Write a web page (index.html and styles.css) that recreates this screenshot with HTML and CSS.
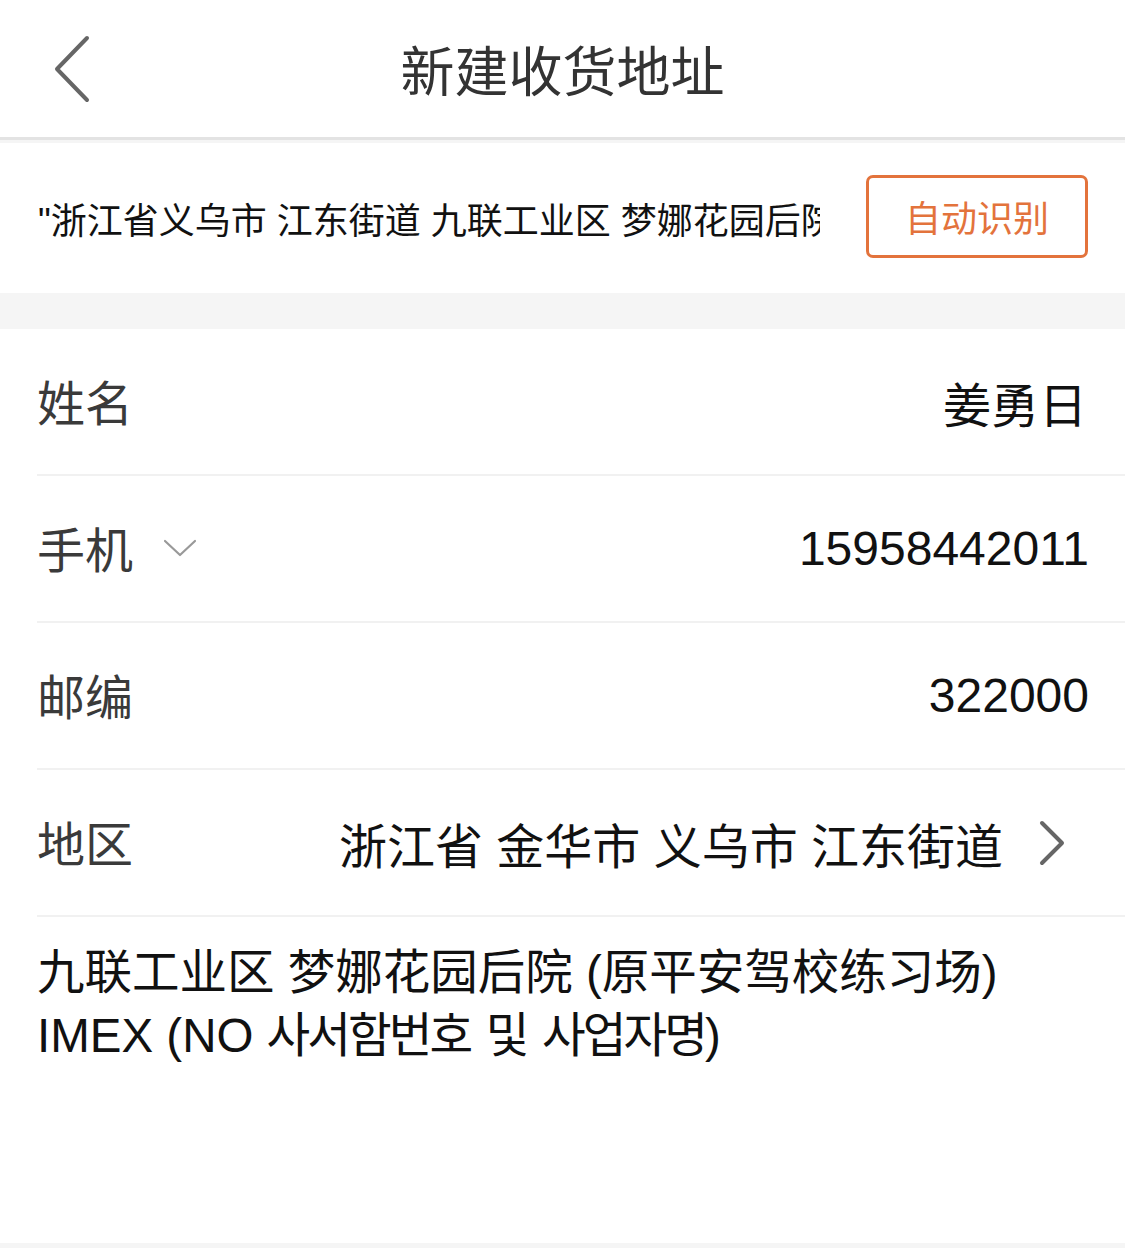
FILE: index.html
```html
<!DOCTYPE html>
<html lang="zh-CN">

<head>
  <meta charset="UTF-8" />
  <meta name="viewport" content="width=device-width, initial-scale=1.0" />
  <title>新建收货地址</title>
  <link rel="stylesheet" href="styles.css">
</head>

<body>
  <header class="topbar">
    <a class="back" href="#">
      <svg width="40" height="70" viewBox="0 0 40 70">
        <polyline points="33,4 3,35 33,66" fill="none" stroke="#666" stroke-width="4" stroke-linecap="round" stroke-linejoin="round" />
      </svg>
    </a>
    <h1>新建收货地址</h1>
  </header>

  <section class="paste">
    <div class="paste-text">"浙江省义乌市 江东街道 九联工业区 梦娜花园后院 (原平安驾校练习场) IMEX</div>
    <button class="detect">自动识别</button>
  </section>

  <section class="form">
    <div class="row">
      <span class="label">姓名</span>
      <span class="value">姜勇日</span>
    </div>
    <div class="row">
      <span class="label">手机</span>
      <svg class="caret" width="34" height="20" viewBox="0 0 34 20">
        <polyline points="2,3 17,17 32,3" fill="none" stroke="#999" stroke-width="2.2" stroke-linecap="round" stroke-linejoin="round" />
      </svg>
      <span class="value num">15958442011</span>
    </div>
    <div class="row">
      <span class="label">邮编</span>
      <span class="value num">322000</span>
    </div>
    <div class="row">
      <span class="label">地区</span>
      <span class="value region">浙江省 金华市 义乌市 江东街道</span>
      <svg class="arrow" width="30" height="46" viewBox="0 0 30 46">
        <polyline points="4,3 24,23 4,43" fill="none" stroke="#666" stroke-width="4" stroke-linecap="round" stroke-linejoin="round" />
      </svg>
    </div>
    <div class="detail">九联工业区 梦娜花园后院 (原平安驾校练习场)<br>IMEX (NO <span class="ko">사서함번호 및 사업자명</span>)</div>
  </section>
</body>

</html>
```

FILE: styles.css
```css
body {
  margin: 0;
  font-family: "Liberation Sans", "Noto Sans CJK SC", sans-serif;
  background: #f5f5f5;
  color: #111;
}

.topbar {
  height: 137px;
  background: white;
  border-bottom: 3px solid #e3e3e3;
  display: flex;
  align-items: center;
  justify-content: center;
  position: relative;
}

.back {
  position: absolute;
  left: 54px;
  top: 34px;
  display: block;
}

.back svg {
  display: block;
}

.topbar h1 {
  margin: 0;
  font-size: 54px;
  font-weight: 400;
  color: #333;
}

.paste {
  background: white;
  border-top: 3px solid #f5f5f5;
  height: 150px;
  display: flex;
  align-items: center;
  padding: 0 37px 0 38px;
  gap: 46px;
}

.paste-text {
  flex: 1;
  font-size: 36px;
  white-space: nowrap;
  overflow: hidden;
}

.detect {
  width: 222px;
  height: 83px;
  border: 3px solid #e3733c;
  border-radius: 7px;
  background: white;
  color: #e3733c;
  font-family: inherit;
  font-size: 36px;
  padding: 0;
  margin-top: -4px;
}

.form {
  background: white;
  margin-top: 36px;
  padding-left: 37px;
}

.row {
  height: 145px;
  border-bottom: 2px solid #f1f1f1;
  display: flex;
  align-items: center;
  padding-right: 38px;
  font-size: 48px;
}

.label {
  color: #3a3a3a;
  margin-top: -3px;
}

.caret {
  margin-left: 30px;
  margin-top: -2px;
}

.value {
  margin-left: auto;
  color: #111;
}

.num {
  font-size: 48px;
  margin-right: -2px;
}

.arrow {
  margin-left: 35px;
  margin-right: 19px;
}

.detail {
  height: 326px;
  box-sizing: border-box;
  padding-top: 26px;
  font-size: 47.5px;
  line-height: 59px;
  color: #111;
}

.detail .ko {
  font-family: "Noto Sans CJK KR", sans-serif;
  letter-spacing: -3px;
  word-spacing: 8px;
}
```
